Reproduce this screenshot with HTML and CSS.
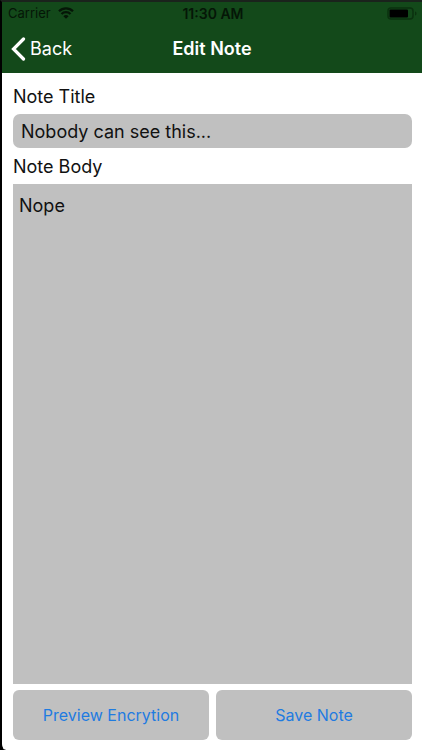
FILE: index.html
```html
<!DOCTYPE html>
<html lang="en">
<head>
  <meta charset="UTF-8">
  <meta name="viewport" content="width=device-width, initial-scale=1.0">
  <title>Edit Note</title>
  <link rel="stylesheet" href="styles.css">
</head>
<body>
  <div class="screen">
    <header class="header">
      <div class="status">
        <div class="carrier">
          <span>Carrier</span>
          <svg class="wifi" viewBox="0 0 16 12" width="16" height="12" aria-hidden="true">
            <path d="M1 4.2a10 10 0 0 1 14 0M3.5 7a6.5 6.5 0 0 1 9 0" fill="none" stroke="currentColor" stroke-width="2.3"/>
            <path d="M8 11.7L5.4 9.2a3.7 3.7 0 0 1 5.2 0z" fill="currentColor"/>
          </svg>
        </div>
        <div class="time">11:30 AM</div>
        <svg class="battery" viewBox="0 0 31 13" width="31" height="13" aria-hidden="true">
          <rect x="1" y="1" width="25" height="11" rx="3" fill="none" stroke="#0b310f" stroke-width="1.5"/>
          <rect x="2.5" y="2.5" width="18.5" height="8" rx="1" fill="#000"/>
          <path d="M28 4.5c2 .5 2 3.5 0 4z" fill="#0b310f"/>
        </svg>
      </div>
      <nav class="nav">
        <a class="back" href="#">
          <svg viewBox="0 0 15 24" width="15" height="24" aria-hidden="true">
            <path d="M12.5 2L2.5 12l10 10" fill="none" stroke="currentColor" stroke-width="3.2" stroke-linecap="round"/>
          </svg>
          <span>Back</span>
        </a>
        <h1>Edit Note</h1>
      </nav>
    </header>

    <form class="note-form">
      <label for="noteTitle">Note Title</label>
      <input type="text" id="noteTitle" name="noteTitle" value="Nobody can see this...">
      <label for="noteBody">Note Body</label>
      <textarea id="noteBody" name="noteBody">Nope</textarea>
      <div class="buttons">
        <button type="button">Preview Encrytion</button>
        <button type="button">Save Note</button>
      </div>
    </form>
  </div>
</body>
</html>
```
FILE: styles.css
```css
* {
  box-sizing: border-box;
}
body {
  margin: 0;
  background: #000;
  color: #111;
  font-family: Inter, "Liberation Sans", sans-serif;
  font-size: 18px;
}
.screen {
  display: flex;
  flex-direction: column;
  min-height: 100vh;
  background: #fff;
  border-top: 2px solid #1a231c;
  border-left: 2px solid #000;
  border-bottom-left-radius: 6px;
}
.header {
  background: #13491a;
}
.status {
  display: grid;
  grid-template-columns: 1fr auto 1fr;
  align-items: center;
  height: 22px;
  padding: 0 4px 0 6px;
  color: #051607;
  font-size: 13px;
}
.carrier {
  display: flex;
  align-items: center;
  gap: 7px;
}
.time {
  font-size: 14px;
  font-weight: 600;
}
.battery {
  justify-self: end;
}
.nav {
  display: grid;
  grid-template-columns: 1fr auto 1fr;
  align-items: center;
  height: 49px;
  padding: 0 9px;
  color: #fff;
}
.back {
  display: flex;
  align-items: center;
  gap: 4px;
  color: #fff;
  text-decoration: none;
}
h1 {
  margin: 0;
  font-size: 18px;
  font-weight: 600;
}
.note-form {
  flex: 1;
  display: flex;
  flex-direction: column;
  gap: 6px;
  padding: 11px 10px 10px 11px;
}
label {
  padding-top: 2px;
  line-height: 22px;
}
input, textarea {
  width: 100%;
  border: none;
  background: #c0c0c0;
  color: #111;
  font: inherit;
  outline: none;
}
input {
  height: 34px;
  padding: 0 8px;
  border-radius: 7px;
}
textarea {
  flex: 1;
  padding: 10px 6px;
  line-height: 24px;
  resize: none;
}
.buttons {
  display: grid;
  grid-template-columns: 1fr 1fr;
  gap: 7px;
}
button {
  height: 50px;
  border: none;
  border-radius: 6px;
  background: #c0c0c0;
  color: #1f7be0;
  font-family: inherit;
  font-size: 16px;
  cursor: pointer;
}
```
